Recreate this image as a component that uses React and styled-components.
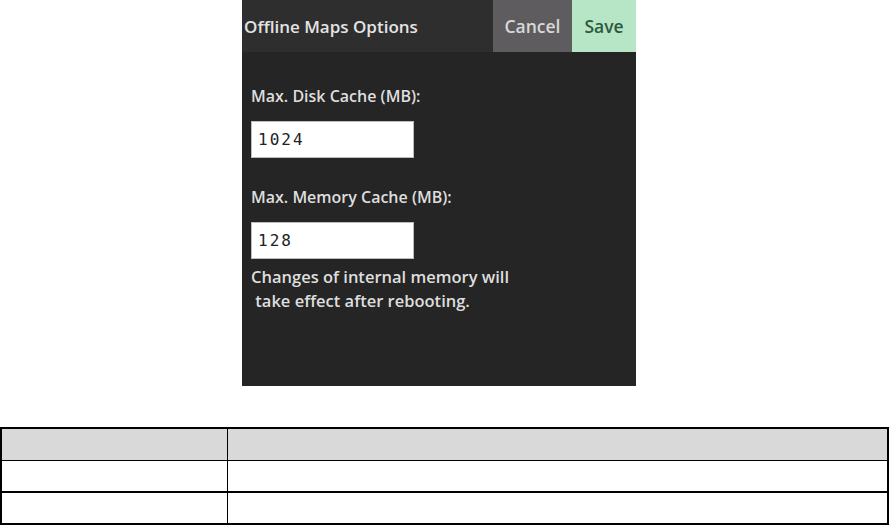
import styled, { createGlobalStyle } from "styled-components";

const GlobalStyle = createGlobalStyle`
  body {
    margin: 0;
    background: #fff;
    font-family: "Open Sans", "Liberation Sans", sans-serif;
  }
`;

const Page = styled.div`
  display: flex;
  flex-direction: column;
  width: 891px;
`;

const Phone = styled.section`
  margin-left: 242px;
  width: 394px;
  height: 386px;
  background: #252525;
  display: flex;
  flex-direction: column;
`;

const Header = styled.header`
  height: 52px;
  display: flex;
  align-items: stretch;
  background: #2e2e2e;
`;

const Title = styled.h1`
  flex: 1;
  margin: 0;
  padding-left: 2px;
  display: flex;
  align-items: center;
  font-size: 17px;
  font-weight: 600;
  color: #e3e3e3;
`;

const HeaderButton = styled.button`
  border: none;
  margin: 0;
  padding: 0;
  font-family: inherit;
  font-size: 17.5px;
  font-weight: 600;
  width: ${(p) => (p.$primary ? "64px" : "79px")};
  background: ${(p) => (p.$primary ? "#b6e6c6" : "#5e5c5f")};
  color: ${(p) => (p.$primary ? "#2c5a3a" : "#d8d8d8")};
`;

const Body = styled.div`
  padding: 33px 0 0 9px;
  display: flex;
  flex-direction: column;
  align-items: flex-start;
`;

const Label = styled.label`
  font-size: 16px;
  font-weight: 600;
  line-height: 22px;
  color: #dedede;
  margin-bottom: 14px;
`;

const Field = styled.input`
  box-sizing: border-box;
  width: 163px;
  height: 37px;
  border: 1px solid #bdbdbd;
  background: #fff;
  padding: 0 6px;
  font-family: "DejaVu Sans Mono", monospace;
  font-size: 16px;
  letter-spacing: 2px;
  color: #222;
  margin-bottom: ${(p) => p.$gap || "28px"};
`;

const Note = styled.p`
  margin: 0;
  font-size: 16.5px;
  font-weight: 600;
  line-height: 24px;
  color: #dedede;
  white-space: pre;
`;

const Table = styled.table`
  margin-top: 41px;
  width: 889px;
  border-collapse: collapse;
  border: 2px solid #000;
`;

const Cell = styled.td`
  height: ${(p) => (p.$head ? "31px" : "30px")};
  padding: 0;
  background: ${(p) => (p.$head ? "#d9d9d9" : "#fff")};
  border-left: 1px solid #000;
  width: ${(p) => p.$w || "auto"};
`;

const Row = styled.tr`
  border-bottom: ${(p) => (p.$thin ? "1px" : "2px")} solid #000;
`;

export default function App() {
  return (
    <Page>
      <GlobalStyle />
      <Phone>
        <Header>
          <Title>Offline Maps Options</Title>
          <HeaderButton>Cancel</HeaderButton>
          <HeaderButton $primary>Save</HeaderButton>
        </Header>
        <Body>
          <Label>Max. Disk Cache (MB):</Label>
          <Field defaultValue="1024" />
          <Label>Max. Memory Cache (MB):</Label>
          <Field defaultValue="128" $gap="6px" />
          <Note>{"Changes of internal memory will\n take effect after rebooting."}</Note>
        </Body>
      </Phone>
      <Table>
        <tbody>
          <Row $thin>
            <Cell $head $w="225px" />
            <Cell $head />
          </Row>
          <Row>
            <Cell />
            <Cell />
          </Row>
          <Row>
            <Cell />
            <Cell />
          </Row>
        </tbody>
      </Table>
    </Page>
  );
}
